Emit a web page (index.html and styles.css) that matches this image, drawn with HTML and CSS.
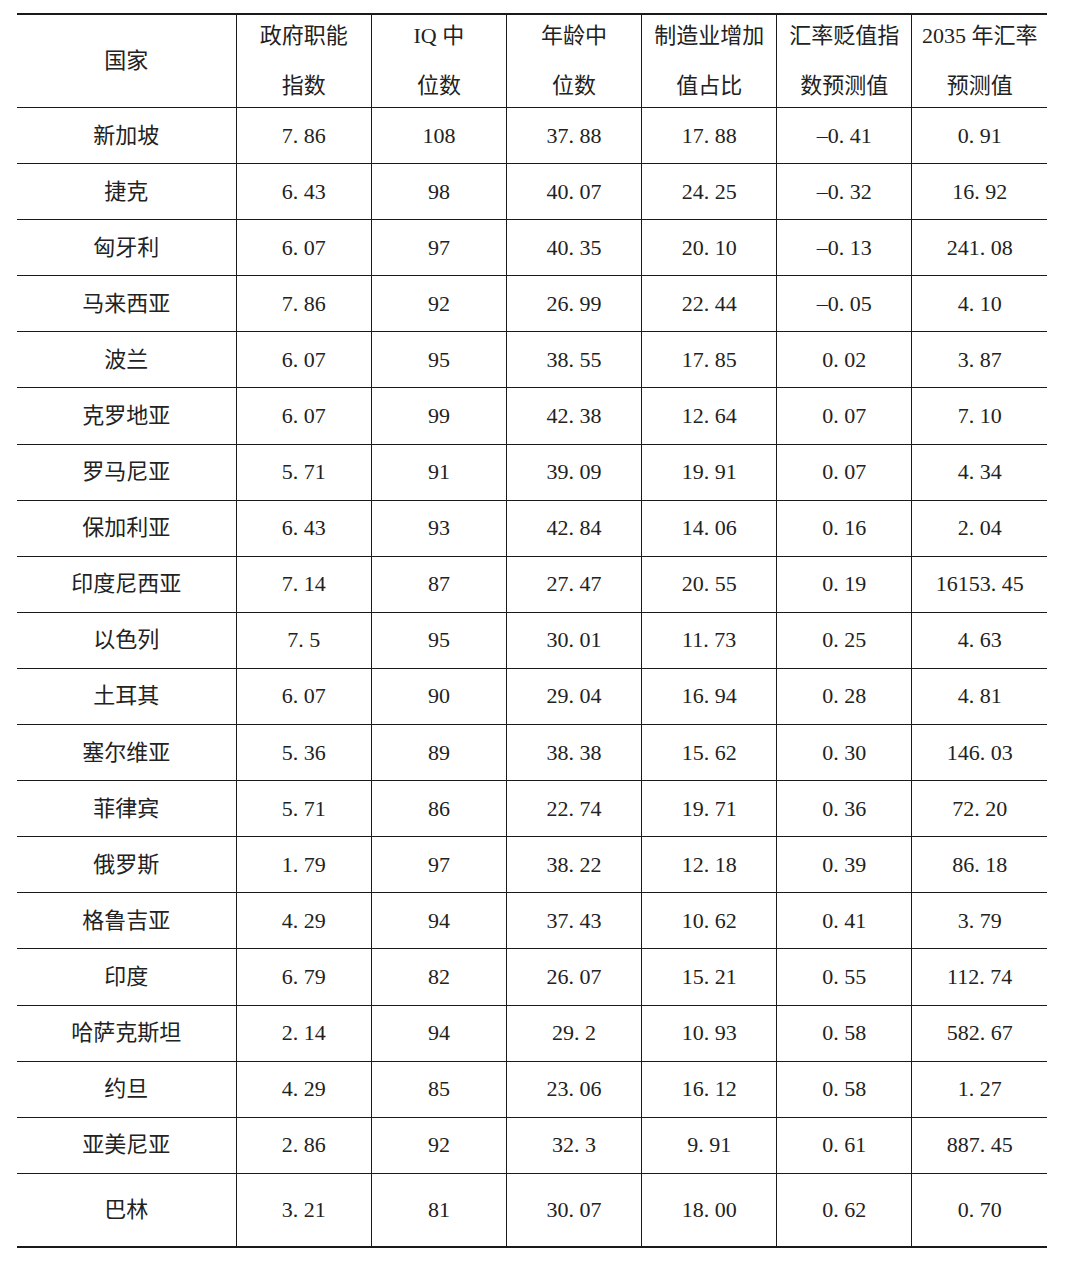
FILE: index.html
```html
<!DOCTYPE html>
<html lang="zh-CN">
<head>
<meta charset="utf-8">
<title>汇率预测表</title>
<link rel="stylesheet" href="styles.css">
</head>
<body>
<table class="data">
  <colgroup>
    <col class="c-name"><col class="c-num"><col class="c-num"><col class="c-num"><col class="c-num"><col class="c-num"><col class="c-num">
  </colgroup>
  <thead>
    <tr>
      <th><span class="hd">国家</span></th>
      <th><span class="hd">政府职能<br>指数</span></th>
      <th><span class="hd">IQ 中<br>位数</span></th>
      <th><span class="hd">年龄中<br>位数</span></th>
      <th><span class="hd">制造业增加<br>值占比</span></th>
      <th><span class="hd">汇率贬值指<br>数预测值</span></th>
      <th><span class="hd">2035 年汇率<br>预测值</span></th>
    </tr>
  </thead>
  <tbody>
    <tr><td>新加坡</td><td>7. 86</td><td>108</td><td>37. 88</td><td>17. 88</td><td>–0. 41</td><td>0. 91</td></tr>
    <tr><td>捷克</td><td>6. 43</td><td>98</td><td>40. 07</td><td>24. 25</td><td>–0. 32</td><td>16. 92</td></tr>
    <tr><td>匈牙利</td><td>6. 07</td><td>97</td><td>40. 35</td><td>20. 10</td><td>–0. 13</td><td>241. 08</td></tr>
    <tr><td>马来西亚</td><td>7. 86</td><td>92</td><td>26. 99</td><td>22. 44</td><td>–0. 05</td><td>4. 10</td></tr>
    <tr><td>波兰</td><td>6. 07</td><td>95</td><td>38. 55</td><td>17. 85</td><td>0. 02</td><td>3. 87</td></tr>
    <tr><td>克罗地亚</td><td>6. 07</td><td>99</td><td>42. 38</td><td>12. 64</td><td>0. 07</td><td>7. 10</td></tr>
    <tr><td>罗马尼亚</td><td>5. 71</td><td>91</td><td>39. 09</td><td>19. 91</td><td>0. 07</td><td>4. 34</td></tr>
    <tr><td>保加利亚</td><td>6. 43</td><td>93</td><td>42. 84</td><td>14. 06</td><td>0. 16</td><td>2. 04</td></tr>
    <tr><td>印度尼西亚</td><td>7. 14</td><td>87</td><td>27. 47</td><td>20. 55</td><td>0. 19</td><td>16153. 45</td></tr>
    <tr><td>以色列</td><td>7. 5</td><td>95</td><td>30. 01</td><td>11. 73</td><td>0. 25</td><td>4. 63</td></tr>
    <tr><td>土耳其</td><td>6. 07</td><td>90</td><td>29. 04</td><td>16. 94</td><td>0. 28</td><td>4. 81</td></tr>
    <tr><td>塞尔维亚</td><td>5. 36</td><td>89</td><td>38. 38</td><td>15. 62</td><td>0. 30</td><td>146. 03</td></tr>
    <tr><td>菲律宾</td><td>5. 71</td><td>86</td><td>22. 74</td><td>19. 71</td><td>0. 36</td><td>72. 20</td></tr>
    <tr><td>俄罗斯</td><td>1. 79</td><td>97</td><td>38. 22</td><td>12. 18</td><td>0. 39</td><td>86. 18</td></tr>
    <tr><td>格鲁吉亚</td><td>4. 29</td><td>94</td><td>37. 43</td><td>10. 62</td><td>0. 41</td><td>3. 79</td></tr>
    <tr><td>印度</td><td>6. 79</td><td>82</td><td>26. 07</td><td>15. 21</td><td>0. 55</td><td>112. 74</td></tr>
    <tr><td>哈萨克斯坦</td><td>2. 14</td><td>94</td><td>29. 2</td><td>10. 93</td><td>0. 58</td><td>582. 67</td></tr>
    <tr><td>约旦</td><td>4. 29</td><td>85</td><td>23. 06</td><td>16. 12</td><td>0. 58</td><td>1. 27</td></tr>
    <tr><td>亚美尼亚</td><td>2. 86</td><td>92</td><td>32. 3</td><td>9. 91</td><td>0. 61</td><td>887. 45</td></tr>
    <tr class="last"><td>巴林</td><td>3. 21</td><td>81</td><td>30. 07</td><td>18. 00</td><td>0. 62</td><td>0. 70</td></tr>
  </tbody>
</table>
</body>
</html>
```

FILE: styles.css
```css
html, body {
  margin: 0;
  padding: 0;
  background: #ffffff;
}

body {
  padding: 13px 0 0 17px;
  font-family: "Liberation Serif", "Noto Sans CJK SC", serif;
  font-size: 22px;
  color: #222222;
}

.data {
  border-collapse: collapse;
  width: 1030px;
  table-layout: fixed;
  border-top: 2px solid #1a1a1a;
  border-bottom: 2px solid #1a1a1a;
}

.c-name { width: 219px; }
.c-num { width: 135px; }

.data th,
.data td {
  text-align: center;
  vertical-align: middle;
  padding: 0;
  font-weight: normal;
  border-left: 1.5px solid #1a1a1a;
  border-top: 1.5px solid #1a1a1a;
  white-space: nowrap;
}

.data th:first-child,
.data td:first-child {
  border-left: none;
}

.data thead th {
  height: 92px;
  border-top: none;
}

.hd {
  display: block;
  line-height: 50px;
  margin: -4px 0;
}

.data tbody td {
  height: 55.1px;
  line-height: 24px;
}

.data tbody tr.last td {
  height: 72px;
}
```
